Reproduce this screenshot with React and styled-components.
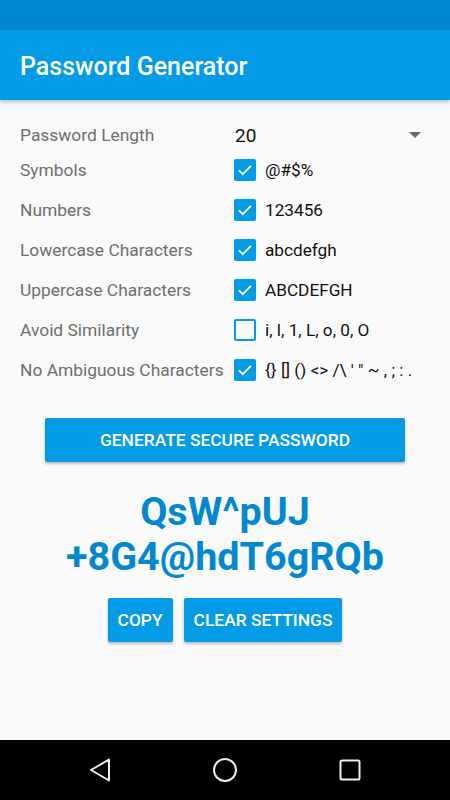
import React from "react";
import styled, { createGlobalStyle } from "styled-components";

const Global = createGlobalStyle`
  html, body { margin: 0; padding: 0; background: #fafafa; }
  body { font-family: Roboto, "Liberation Sans", sans-serif; }
  * { box-sizing: border-box; }
`;

const Screen = styled.div`
  width: 450px;
  height: 800px;
  display: flex;
  flex-direction: column;
  background: #fafafa;
  overflow: hidden;
`;

const StatusBar = styled.div`
  height: 30px;
  background: #0288d1;
`;

const AppBar = styled.div`
  height: 70px;
  background: #039be5;
  display: flex;
  align-items: center;
  padding: 3px 20px 0;
  box-shadow: 0 2px 4px rgba(0, 0, 0, 0.25);
  position: relative;
  z-index: 1;
`;

const Title = styled.h1`
  margin: 0;
  color: #fff;
  font-size: 25px;
  font-weight: 500;
`;

const Content = styled.div`
  flex: 1;
  display: flex;
  flex-direction: column;
  padding: 20px 20px 0;
`;

const Row = styled.div`
  display: grid;
  grid-template-columns: 214px 1fr;
  align-items: center;
  height: ${(p) => p.h || 40}px;
`;

const Label = styled.div`
  font-size: 17.4px;
  color: #6f6f6f;
  white-space: nowrap;
`;

const Select = styled.div`
  display: flex;
  align-items: center;
  justify-content: space-between;
  padding-left: 1px;
  padding-right: 9px;
  font-size: 19px;
  color: #111;
`;

const Caret = styled.span`
  width: 0;
  height: 0;
  border-left: 6px solid transparent;
  border-right: 6px solid transparent;
  border-top: 6px solid #6a6a6a;
`;

const CheckWrap = styled.div`
  display: flex;
  align-items: center;
  gap: 9px;
  font-size: 17.2px;
  color: #111;
  white-space: nowrap;
`;

const Box = styled.span`
  width: 22px;
  height: 22px;
  border-radius: 2px;
  display: flex;
  align-items: center;
  justify-content: center;
  background: ${(p) => (p.on ? "#039be5" : "transparent")};
  border: ${(p) => (p.on ? "none" : "2px solid #039be5")};
  flex-shrink: 0;
`;

const Button = styled.button`
  border: none;
  border-radius: 2px;
  background: #039be5;
  color: #fff;
  font-family: Roboto, "Liberation Sans", sans-serif;
  font-size: 17.4px;
  font-weight: 500;
  height: 44px;
  padding: 0 10px;
  box-shadow: 0 2px 3px rgba(0, 0, 0, 0.25);
`;

const WideButton = styled(Button)`
  align-self: center;
  width: 360px;
  margin-top: 28px;
`;

const Password = styled.div`
  margin-top: 27px;
  text-align: center;
  font-size: 39.5px;
  font-weight: 700;
  line-height: 45px;
  color: #0288d1;
`;

const Actions = styled.div`
  display: flex;
  justify-content: center;
  gap: 11px;
  margin-top: 19px;
`;

const NavBar = styled.div`
  height: 60px;
  background: #000;
  display: flex;
  align-items: center;
  justify-content: space-between;
  padding: 0 88px;
`;

const Check = () => (
  <svg width="18" height="18" viewBox="0 0 24 24">
    <path d="M4 12.5l5 5L20 6.5" fill="none" stroke="#fff" strokeWidth="2.8" />
  </svg>
);

const Option = ({ label, value, on }) => (
  <Row>
    <Label>{label}</Label>
    <CheckWrap>
      <Box on={on ? 1 : 0}>{on && <Check />}</Box>
      {value}
    </CheckWrap>
  </Row>
);

const options = [
  ["Symbols", "@#$%", true],
  ["Numbers", "123456", true],
  ["Lowercase Characters", "abcdefgh", true],
  ["Uppercase Characters", "ABCDEFGH", true],
  ["Avoid Similarity", "i, l, 1, L, o, 0, O", false],
  ["No Ambiguous Characters", "{} [] () <> /\\ ' \" ~ , ; : .", true],
];

export default function App() {
  return (
    <Screen>
      <Global />
      <StatusBar />
      <AppBar>
        <Title>Password Generator</Title>
      </AppBar>
      <Content>
        <Row h={30}>
          <Label>Password Length</Label>
          <Select>
            20
            <Caret />
          </Select>
        </Row>
        {options.map(([l, v, on]) => (
          <Option key={l} label={l} value={v} on={on} />
        ))}
        <WideButton>GENERATE SECURE PASSWORD</WideButton>
        <Password>
          QsW^pUJ
          <br />
          +8G4@hdT6gRQb
        </Password>
        <Actions>
          <Button>COPY</Button>
          <Button>CLEAR SETTINGS</Button>
        </Actions>
      </Content>
      <NavBar>
        <svg width="24" height="24" viewBox="0 0 24 24">
          <path d="M21 1.5v21L3 12z" fill="none" stroke="#eee" strokeWidth="2" strokeLinejoin="round" />
        </svg>
        <svg width="24" height="24" viewBox="0 0 24 24">
          <circle cx="12" cy="12" r="11" fill="none" stroke="#eee" strokeWidth="2" />
        </svg>
        <svg width="24" height="24" viewBox="0 0 24 24">
          <rect x="2.5" y="2.5" width="19" height="19" rx="1.5" fill="none" stroke="#eee" strokeWidth="2" />
        </svg>
      </NavBar>
    </Screen>
  );
}
